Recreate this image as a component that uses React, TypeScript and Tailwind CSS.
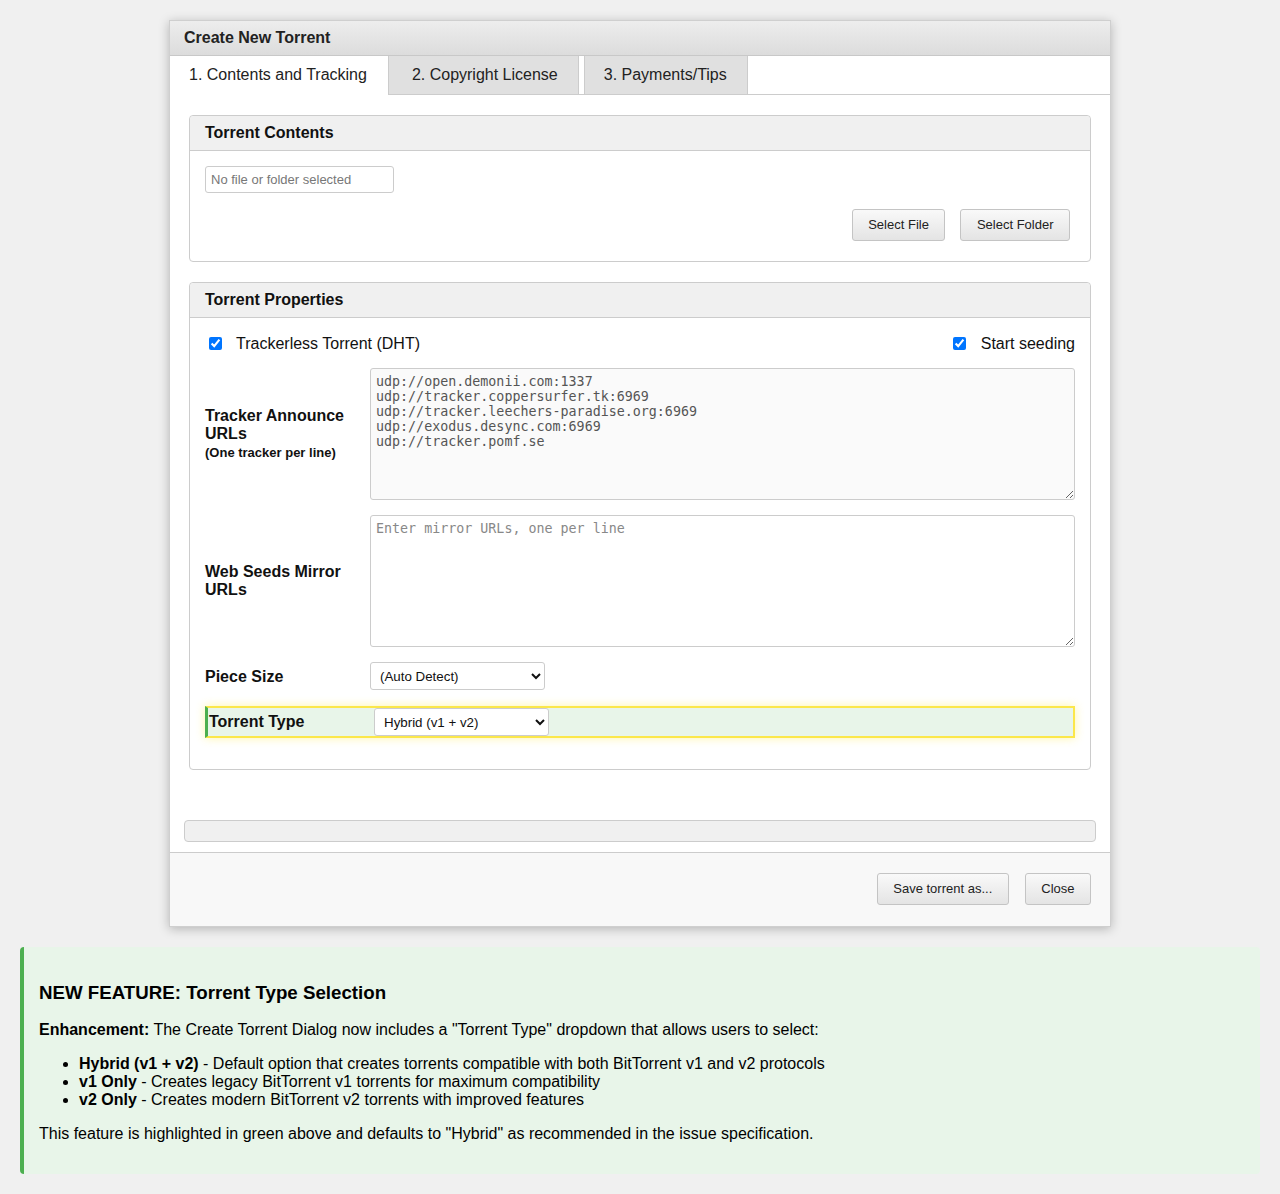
import React from 'react';

// Component - Button
function Button(properties: { children: React.ReactNode; className?: string }) {
    return (
        <button
            type="button"
            className={
                'h-[32px] rounded-[3px] border border-[#c4c4c4] bg-linear-to-b from-[#f9f9f9] to-[#e4e4e4] px-[15.5px] text-[13px] text-[#222] ' +
                (properties.className || '')
            }
        >
            {properties.children}
        </button>
    );
}

// Component - Section
function Section(properties: { title: string; children: React.ReactNode; className?: string }) {
    return (
        <div className={'rounded-[4px] border border-[#ccc] bg-white ' + (properties.className || '')}>
            <div className="flex h-[35px] items-center rounded-t-[4px] border-b border-[#ccc] bg-[#f0f0f0] px-[15px] text-[16px] font-bold text-[#111]">
                {properties.title}
            </div>
            {properties.children}
        </div>
    );
}

const trackers = [
    'udp://open.demonii.com:1337',
    'udp://tracker.coppersurfer.tk:6969',
    'udp://tracker.leechers-paradise.org:6969',
    'udp://exodus.desync.com:6969',
    'udp://tracker.pomf.se',
].join('\n');

// Component - App
export default function App() {
    return (
        <div className="min-h-screen bg-[#f0f0f0] p-5 font-['Liberation_Sans',Arial,sans-serif] text-[#111]">
            {/* Dialog */}
            <div className="mx-auto w-[942px] border border-[#cfcfcf] bg-white shadow-[0_2px_10px_rgba(0,0,0,0.25)]">
                {/* Title Bar */}
                <div className="flex h-[35px] items-center border-b border-[#c8c8c8] bg-linear-to-b from-[#ededed] to-[#dcdcdc] px-[14px] text-[16px] font-bold text-[#222]">
                    Create New Torrent
                </div>

                {/* Tabs */}
                <div className="flex h-[39px] border-b border-[#ccc] bg-white text-[16px] text-[#222]">
                    <div className="relative z-10 flex h-[39px] items-center border-r border-[#ccc] bg-white pr-[21px] pb-[1px] pl-[19px]">
                        1. Contents and Tracking
                    </div>
                    <div className="flex h-[38px] items-center border-r border-[#ccc] bg-[#e0e0e0] pl-[23px] pr-[20px]">
                        2. Copyright License
                    </div>
                    <div className="ml-[5px] flex h-[38px] items-center border-x border-[#ccc] bg-[#e0e0e0] pr-[20px] pl-[19px]">
                        3. Payments/Tips
                    </div>
                </div>

                {/* Content */}
                <div className="px-[19px] pt-[20px] pb-[20px]">
                    {/* Torrent Contents */}
                    <Section title="Torrent Contents" className="mb-[20px]">
                        <div className="px-[15px] pt-[15px] pb-[20px]">
                            <input
                                type="text"
                                placeholder="No file or folder selected"
                                className="block h-[27px] w-[189px] rounded-[3px] border border-[#ccc] px-[5px] text-[13px] placeholder:text-[#777]"
                            />
                            <div className="mt-[16px] flex justify-end gap-[15px] pr-[5px]">
                                <Button>Select File</Button>
                                <Button>Select Folder</Button>
                            </div>
                        </div>
                    </Section>

                    {/* Torrent Properties */}
                    <Section title="Torrent Properties">
                        <div className="px-[15px] pt-[15px] pb-[31px]">
                            {/* Checkboxes */}
                            <div className="flex h-[20px] items-center justify-between pt-[1px] text-[16px]">
                                <label className="flex items-center">
                                    <input type="checkbox" defaultChecked className="m-0 ml-[4px] h-[13px] w-[13px]" />
                                    <span className="ml-[14px]">Trackerless Torrent (DHT)</span>
                                </label>
                                <label className="flex items-center">
                                    <input type="checkbox" defaultChecked className="m-0 h-[13px] w-[13px]" />
                                    <span className="ml-[15px]">Start seeding</span>
                                </label>
                            </div>

                            {/* Tracker URLs */}
                            <div className="mt-[15px] flex items-center">
                                <div className="w-[165px] shrink-0 pr-[15px] pb-[1px]">
                                    <div className="text-[16px] leading-[18px] font-bold">Tracker Announce URLs</div>
                                    <div className="mt-[2px] text-[13px] leading-[15px] font-bold">(One tracker per line)</div>
                                </div>
                                <textarea
                                    defaultValue={trackers}
                                    className="block h-[132px] flex-1 rounded-[3px] border border-[#ccc] bg-[#fafafa] px-[5px] py-[5px] font-['DejaVu_Sans_Mono',monospace] text-[13.333px] leading-[15px] text-[#555]"
                                />
                            </div>

                            {/* Web Seeds */}
                            <div className="mt-[15px] flex items-center">
                                <div className="w-[165px] shrink-0 pr-[15px] text-[16px] leading-[18px] font-bold">
                                    Web Seeds Mirror URLs
                                </div>
                                <textarea
                                    placeholder="Enter mirror URLs, one per line"
                                    className="block h-[132px] flex-1 rounded-[3px] border border-[#ccc] bg-white px-[5px] py-[5px] font-['DejaVu_Sans_Mono',monospace] text-[13.333px] leading-[15px] text-[#555] placeholder:text-[#888]"
                                />
                            </div>

                            {/* Piece Size */}
                            <div className="mt-[15px] flex items-center">
                                <div className="w-[165px] shrink-0 pt-[1px] text-[16px] font-bold">Piece Size</div>
                                <select className="h-[28px] w-[175px] rounded-[3px] border border-[#ccc] bg-white px-[5px] text-[13.333px] text-[#111]">
                                    <option>(Auto Detect)</option>
                                </select>
                            </div>

                            {/* Torrent Type */}
                            <div className="mt-[16px] flex h-[32px] items-center border-2 border-l-[3px] border-[#fbe74a] border-l-[#4caf50] bg-[#e8f5e9] shadow-[0_0_10px_rgba(255,235,59,0.45)]">
                                <div className="w-[166px] shrink-0 pl-[1px] text-[16px] font-bold">Torrent Type</div>
                                <select className="h-[28px] w-[175px] rounded-[3px] border border-[#ccc] bg-white px-[5px] text-[13.333px] text-[#111]">
                                    <option>Hybrid (v1 + v2)</option>
                                    <option>v1 Only</option>
                                    <option>v2 Only</option>
                                </select>
                            </div>
                        </div>
                    </Section>
                </div>

                {/* Progress */}
                <div className="px-[14px] pt-[30px] pb-[10px]">
                    <div className="h-[22px] rounded-[4px] border border-[#ccc] bg-[#f0f0f0]" />
                </div>

                {/* Footer */}
                <div className="flex justify-end gap-[16px] border-t border-[#ccc] bg-[#f8f8f8] px-[19px] pt-[20px] pb-[21px]">
                    <Button>Save torrent as...</Button>
                    <Button>Close</Button>
                </div>
            </div>

            {/* Feature Note */}
            <div className="mt-[20px] rounded-[4px] border-l-4 border-[#4caf50] bg-[#e8f5e9] px-[15px] pt-[16px] pb-[15px] text-[16px] leading-[18px] text-black">
                <h3 className="my-[18.72px] text-[18.72px] leading-[21px] font-bold">NEW FEATURE: Torrent Type Selection</h3>
                <p className="my-[16px]">
                    <strong>Enhancement:</strong> The Create Torrent Dialog now includes a &quot;Torrent Type&quot; dropdown
                    that allows users to select:
                </p>
                <ul className="my-[16px] list-disc pl-[40px]">
                    <li>
                        <strong>Hybrid (v1 + v2)</strong> - Default option that creates torrents compatible with both
                        BitTorrent v1 and v2 protocols
                    </li>
                    <li>
                        <strong>v1 Only</strong> - Creates legacy BitTorrent v1 torrents for maximum compatibility
                    </li>
                    <li>
                        <strong>v2 Only</strong> - Creates modern BitTorrent v2 torrents with improved features
                    </li>
                </ul>
                <p className="my-[16px]">
                    This feature is highlighted in green above and defaults to &quot;Hybrid&quot; as recommended in the
                    issue specification.
                </p>
            </div>
        </div>
    );
}
